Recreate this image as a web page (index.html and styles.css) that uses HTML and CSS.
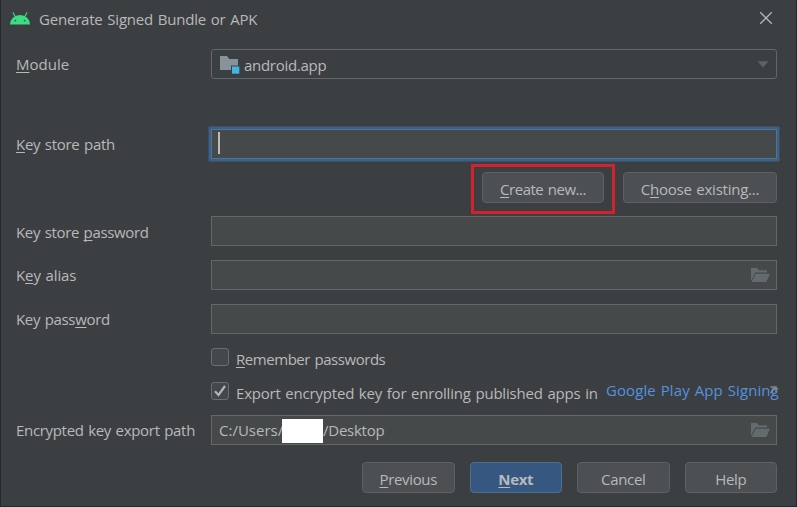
FILE: index.html
```html
<!DOCTYPE html>
<html lang="en">
<head>
<meta charset="utf-8">
<title>Generate Signed Bundle or APK</title>
<link rel="stylesheet" href="styles.css">
</head>
<body>
<main class="dialog">
  <header class="titlebar">
    <svg class="android" width="20" height="13" viewBox="0 0 20 13"><path d="M0 12.5a10 9.6 0 0 1 20 0z" fill="#3ddc84"/><path d="M3.1.7l2.2 4M16.9.7l-2.2 4" stroke="#3ddc84" stroke-width="1.1" stroke-linecap="round"/><circle cx="5.4" cy="8.6" r=".9" fill="#285b40"/><circle cx="14.6" cy="8.6" r=".9" fill="#285b40"/></svg>
    <h1 class="title"><span class="t-title">Generate Signed Bundle or APK</span></h1>
    <svg class="close" width="14" height="14" viewBox="0 0 14 14"><path d="M1.2 1.2l11.6 11.6M12.8 1.2L1.2 12.8" stroke="#b4b7b9" stroke-width="1.25"/></svg>
  </header>

  <form class="form">
    <div class="row row-module">
      <label><span class="t-module"><u>M</u>odule</span></label>
      <div class="combo">
        <svg width="20" height="19" viewBox="0 0 20 19"><path d="M0 1h7l2.2 3H18v6.6h-7V15H0z" fill="#87939a"/><path d="M12 11.5h7.3V18.7H12z" fill="#40b6e0"/></svg>
        <span class="t-app">android.app</span>
        <svg class="arrow" width="12" height="7" viewBox="0 0 12 7"><path d="M.5.3h11L6 6.5z" fill="#5f6265"/></svg>
      </div>
    </div>
    <div class="row row-path">
      <label><span class="t-path"><u>K</u>ey store path</span></label>
      <div class="field focused"><i class="caret"></i></div>
    </div>
    <div class="actions">
      <div class="highlight"><button type="button" class="btn create"><span class="t-create"><u>C</u>reate new...</span></button></div>
      <button type="button" class="btn choose"><span class="t-choose">C<u>h</u>oose existing...</span></button>
    </div>
    <div class="row row-store">
      <label><span class="t-store">Key store <u>p</u>assword</span></label>
      <div class="field"></div>
    </div>
    <div class="row row-alias">
      <label><span class="t-alias">K<u>e</u>y alias</span></label>
      <div class="field"><svg class="folder" width="19" height="14" viewBox="0 0 19 14"><path d="M0 13V0h6l1.6 2.2H16V4.600H4.200z" fill="#646b6e"/><path d="M4.600 5.700H19L15.300 14H.6z" fill="#646b6e"/></svg></div>
    </div>
    <div class="row row-keypw">
      <label><span class="t-keypw">Key pass<u>w</u>ord</span></label>
      <div class="field"></div>
    </div>
    <div class="check-row">
      <i class="box"></i>
      <span class="check-label"><span class="t-remember"><u>R</u>emember passwords</span></span>
    </div>
    <div class="check-row row-export">
      <i class="box"><svg width="12" height="12" viewBox="0 0 12 12"><path d="M1 6.300L4.500 10 11 1" fill="none" stroke="#b2b5b6" stroke-width="2.200"/></svg></i>
      <span class="check-label export-label"><span class="t-export">Export encrypted key for enrolling published apps in</span></span>
      <a class="link"><span class="t-link">Google Play App Signing</span><svg class="external" width="8" height="8" viewBox="0 0 8 8"><path d="M1.500 1H7v5.500M6.500 1.500L1.500 7" fill="none" stroke="#8b939a" stroke-width="1.600"/></svg></a>
    </div>
    <div class="row row-dest">
      <label><span class="t-dest">Encrypted key export path</span></label>
      <div class="field value"><span class="t-users">C:/Users/</span><i class="redacted"></i><span class="t-desktop">/Desktop</span><svg class="folder" width="19" height="14" viewBox="0 0 19 14"><path d="M0 13V0h6l1.600 2.200H16V4.600H4.200z" fill="#646b6e"/><path d="M4.600 5.700H19L15.300 14H.6z" fill="#646b6e"/></svg></div>
    </div>
    <footer class="footer">
      <button type="button" class="btn"><span class="t-prev"><u>P</u>revious</span></button>
      <button type="button" class="btn primary"><span class="t-next"><u>N</u>ext</span></button>
      <button type="button" class="btn"><span class="t-cancel">Cancel</span></button>
      <button type="button" class="btn"><span class="t-help">Help</span></button>
    </footer>
  </form>
</main>
</body>
</html>
```

FILE: styles.css
```css
* { box-sizing: border-box; }
body {
  margin: 0;
  background: #3c3f41;
  color: #b7b9ba;
  font: 15px/20px "Open Sans", "Noto Sans", sans-serif;
  word-spacing: 1px;
}
.dialog {
  width: 797px;
  height: 507px;
  overflow: hidden;
  border: 1px solid #25272a;
  border-top: 0;
  background: #3c3f41;
  white-space: nowrap;
}
u { text-decoration: underline; text-decoration-thickness: 1px; text-underline-offset: 2px; text-decoration-skip-ink: none; }
svg { display: block; flex: none; }
.titlebar { display: flex; align-items: center; height: 38px; padding: 0 23px 0 9px; }
.android { margin-top: -1px; }
.title { flex: 1; margin: 0 0 0 9px; font-size: 15px; font-weight: 400; letter-spacing: -.2px; }
.close { margin-top: -2px; }
.form { margin: 0; padding: 11px 19px 0 15px; }
.row { display: grid; grid-template-columns: 195px 566px; height: 30px; }
.row label { align-self: center; }
.row-path { margin-top: 50px; }
.row-alias, .row-keypw { margin-top: 14px; }
.combo {
  display: flex; align-items: center;
  padding: 2px 7px 0 8px;
  border: 1px solid #646667; border-radius: 3px;
}
.combo span { flex: 1; margin-left: 4px; padding-top: 0; }
.combo svg:first-child { margin-top: -1px; }
.arrow { margin-top: -2px; }
.field {
  display: flex; align-items: center;
  padding: 0 6px 0 7px;
  border: 1px solid #646667;
  background: #45494a;
}
.focused { padding-left: 6px; border-color: #4a74a0; box-shadow: 0 0 0 2.500px #3d6185; }
.caret { width: 2px; height: 22px; margin-top: -2px; background: #bbb; }
.folder { margin-left: auto; }
.actions { display: flex; justify-content: flex-end; align-items: center; height: 50px; margin-top: 5px; }
.highlight {
  display: flex; align-items: center; justify-content: center;
  width: 144px; height: 50px; margin-right: 8px;
  border: 3px solid #d0232d;
}
.btn {
  display: flex; align-items: center; justify-content: center;
  height: 31px; padding: 3px 0 0;
  border: 1px solid #5e6162; border-radius: 4px;
  background: #4c5052; color: #b7b9ba; font: inherit; word-spacing: 1px;
}
.create { width: 122px; margin-top: -3px; }
.choose { width: 154px; margin-top: -3px; }
.row-store { margin-top: 2px; }
.row-store label { padding-top: 2px; }
.check-row { display: flex; align-items: center; height: 18px; margin: 14px 0 0 195px; }
.check-row > * { flex: none; }
.row-export { margin-top: 16px; }
.box {
  display: flex; align-items: center; justify-content: center;
  width: 18px; height: 18px;
  border: 1px solid #6b6e70; border-radius: 3px; background: #43494a;
}
.check-label { margin: 4px 0 0 7px; }
.link { position: relative; width: 173px; margin: -3px 0 0 8px; color: #589df6; opacity: .88; }
.external { position: absolute; right: 2px; top: 6px; }
.row-dest { margin-top: 15px; }
.redacted { width: 41px; height: 24px; margin-top: 2px; background: #fff; }
.t-app { letter-spacing: -.28px; }
.t-path { letter-spacing: -.29px; }
.t-create { letter-spacing: -.48px; }
.t-choose { letter-spacing: -.24px; }
.t-store { letter-spacing: -.34px; }
.t-alias { letter-spacing: -.12px; }
.t-keypw { letter-spacing: -.33px; }
.t-remember { letter-spacing: -.45px; }
.t-export { letter-spacing: -.2px; }
.export-label { width: 362px; }
.t-link { letter-spacing: .08px; }
.t-dest { letter-spacing: -.32px; }
.t-users { width: 63px; }
.t-desktop { letter-spacing: -.25px; }
.t-prev, .t-next, .t-cancel, .t-help { letter-spacing: -.35px; }
.footer { display: flex; gap: 15px; justify-content: flex-end; margin-top: 17px; }
.footer .btn { width: 92.500px; }
.footer .primary { background: #365880; border-color: #4c708c; font-weight: 700; }
```
